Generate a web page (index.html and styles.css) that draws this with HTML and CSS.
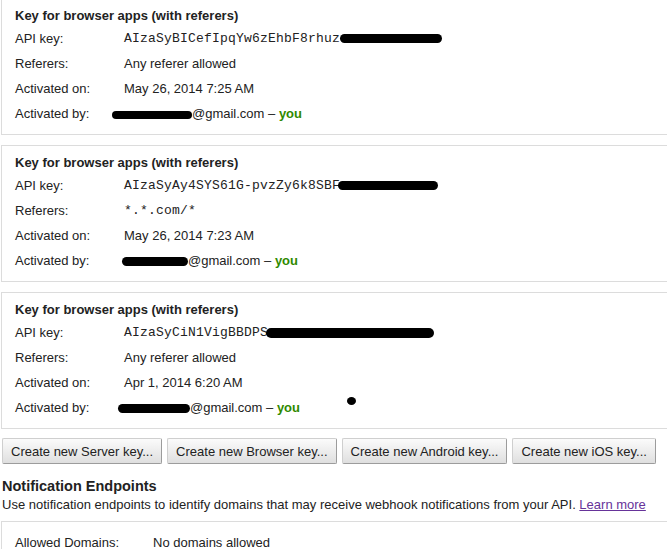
FILE: index.html
```html
<!DOCTYPE html>
<html>
<head>
<meta charset="utf-8">
<link rel="stylesheet" href="styles.css">
</head>
<body>
<div class="page">
  <div class="keys">
    <section class="key">
      <h3 class="key-title">Key for browser apps (with referers)</h3>
      <div class="rows">
        <div class="label">API key:</div>
        <div class="value mono">AIzaSyBICefIpqYw6zEhbF8rhuz<span class="blob b1k"></span></div>
        <div class="label">Referers:</div>
        <div class="value">Any referer allowed</div>
        <div class="label">Activated on:</div>
        <div class="value">May 26, 2014 7:25 AM</div>
        <div class="label">Activated by:</div>
        <div class="value"><span class="blob b1u"></span>@gmail.com – <b class="you">you</b></div>
      </div>
    </section>
    <section class="key">
      <h3 class="key-title">Key for browser apps (with referers)</h3>
      <div class="rows">
        <div class="label">API key:</div>
        <div class="value mono">AIzaSyAy4SYS61G-pvzZy6k8SBF<span class="blob b2k"></span></div>
        <div class="label">Referers:</div>
        <div class="value mono">*.*.com/*</div>
        <div class="label">Activated on:</div>
        <div class="value">May 26, 2014 7:23 AM</div>
        <div class="label">Activated by:</div>
        <div class="value"><span class="blob b2u"></span>@gmail.com – <b class="you">you</b></div>
      </div>
    </section>
    <section class="key key-marked">
      <h3 class="key-title">Key for browser apps (with referers)</h3>
      <div class="rows">
        <div class="label">API key:</div>
        <div class="value mono">AIzaSyCiN1VigBBDPS<span class="blob b3k"></span></div>
        <div class="label">Referers:</div>
        <div class="value">Any referer allowed</div>
        <div class="label">Activated on:</div>
        <div class="value">Apr 1, 2014 6:20 AM</div>
        <div class="label">Activated by:</div>
        <div class="value"><span class="blob b3u"></span>@gmail.com – <b class="you">you</b></div>
      </div>
      <span class="dot"></span>
    </section>
  </div>

  <div class="actions">
    <button class="btn">Create new Server key...</button>
    <button class="btn">Create new Browser key...</button>
    <button class="btn">Create new Android key...</button>
    <button class="btn">Create new iOS key...</button>
  </div>

  <h2 class="section-title">Notification Endpoints</h2>
  <p class="section-desc">Use notification endpoints to identify domains that may receive webhook notifications from your API. <a href="#" class="link">Learn more</a></p>

  <section class="domains">
    <div class="domains-row">
      <div class="label">Allowed Domains:</div>
      <div class="value">No domains allowed</div>
    </div>
  </section>
</div>
</body>
</html>
```
FILE: styles.css
```css
html, body {
  margin: 0;
  padding: 0;
  background: #fff;
}

body {
  font-family: "Liberation Sans", Arial, sans-serif;
  font-size: 13px;
  color: #222;
}

.page {
  width: 667px;
  height: 549px;
  overflow: hidden;
}

.keys {
  display: flex;
  flex-direction: column;
  gap: 10px;
  margin-top: -2px;
  padding-left: 1px;
}

.key {
  position: relative;
  box-sizing: border-box;
  width: 667px;
  border: 1px solid #dcdcdc;
  padding: 6px 0 8px 13px;
}

.key-title {
  margin: 0;
  font-size: 13px;
  font-weight: bold;
  line-height: 21px;
  color: #222;
}

.rows {
  display: grid;
  grid-template-columns: 109px 1fr;
  line-height: 25px;
}

.label,
.value {
  white-space: nowrap;
}

.mono {
  font-family: "Liberation Mono", "Courier New", monospace;
  font-size: 13px;
  letter-spacing: 0.2px;
}

.you {
  color: #2f8a00;
  font-weight: bold;
}

.blob {
  display: inline-block;
  height: 9px;
  background: #000;
  border-radius: 5px;
  vertical-align: middle;
}

.b1k { width: 102px; margin-left: 0; }
.b2k { width: 100px; margin-left: -2px; }
.b3k { width: 168px; margin-left: -2px; height: 10px; }
.b1u { width: 80px; margin-left: -12px; height: 8px; }
.b2u { width: 66px; margin-left: -2px; }
.b3u { width: 72px; margin-left: -6px; }

.dot {
  position: absolute;
  left: 345px;
  top: 104px;
  width: 9px;
  height: 8px;
  border-radius: 50%;
  background: #000;
}

.actions {
  display: flex;
  gap: 5px;
  margin-top: 9px;
  padding-left: 2px;
}

.btn {
  height: 26px;
  padding: 0 8px;
  font-family: "Liberation Sans", Arial, sans-serif;
  font-size: 13px;
  color: #222;
  background: linear-gradient(#fbfbfb, #dfdfdf);
  border: 1px solid;
  border-color: #cfcfcf #9c9c9c #9c9c9c #cfcfcf;
  border-radius: 2px;
  white-space: nowrap;
}

.section-title {
  margin: 14px 0 0;
  padding-left: 2px;
  font-size: 14.5px;
  font-weight: bold;
  line-height: 16px;
  color: #222;
}

.section-desc {
  margin: 3px 0 0;
  padding-left: 2px;
  line-height: 16px;
  white-space: nowrap;
}

.link {
  color: #663399;
  text-decoration: underline;
}

.domains {
  box-sizing: border-box;
  width: 667px;
  margin: 8px 0 0 1px;
  border: 1px solid #dcdcdc;
  padding: 8px 0 8px 13px;
}

.domains-row {
  display: grid;
  grid-template-columns: 138px 1fr;
  line-height: 25px;
}
```
